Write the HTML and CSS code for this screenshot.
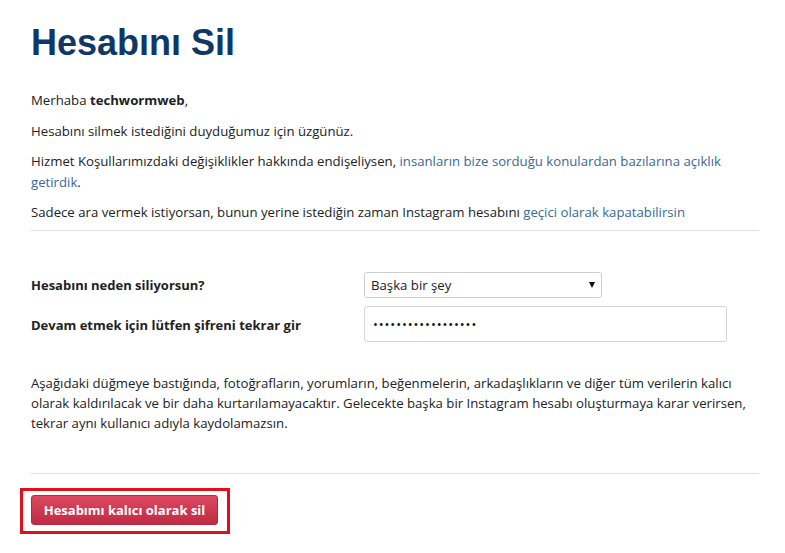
FILE: index.html
```html
<!DOCTYPE html>
<html lang="tr">
<head>
<meta charset="utf-8">
<title>Hesabını Sil</title>
<link rel="stylesheet" href="styles.css">
</head>
<body>
<main class="page">
  <h1 class="title">Hesabını Sil</h1>
  <p class="text">Merhaba <strong>techwormweb</strong>,</p>
  <p class="text">Hesabını silmek istediğini duyduğumuz için üzgünüz.</p>
  <p class="text">Hizmet Koşullarımızdaki değişiklikler hakkında endişeliysen, <a class="link" href="#">insanların bize sorduğu konulardan bazılarına açıklık getirdik</a>.</p>
  <p class="text">Sadece ara vermek istiyorsan, bunun yerine istediğin zaman Instagram hesabını <a class="link" href="#">geçici olarak kapatabilirsin</a></p>
  <hr class="rule rule-top">
  <form class="form">
    <div class="row">
      <label class="label" for="reason">Hesabını neden siliyorsun?</label>
      <div class="select-wrap">
        <select id="reason" class="select">
          <option>Başka bir şey</option>
        </select>
      </div>
    </div>
    <div class="row">
      <label class="label" for="pw">Devam etmek için lütfen şifreni tekrar gir</label>
      <input id="pw" class="input" type="password" value="abcdefghijklmnopqr">
    </div>
  </form>
  <p class="text warning">Aşağıdaki düğmeye bastığında, fotoğrafların, yorumların, beğenmelerin, arkadaşlıkların ve diğer tüm verilerin kalıcı olarak kaldırılacak ve bir daha kurtarılamayacaktır. Gelecekte başka bir Instagram hesabı oluşturmaya karar verirsen, tekrar aynı kullanıcı adıyla kaydolamazsın.</p>
  <hr class="rule rule-bottom">
  <div class="highlight">
    <button class="btn" type="button">Hesabımı kalıcı olarak sil</button>
  </div>
</main>
</body>
</html>
```
FILE: styles.css
```css
html, body {
  margin: 0;
  padding: 0;
  background: #fff;
}

body {
  font-family: "Open Sans", "Noto Sans", sans-serif;
  font-size: 13.2px;
  color: #222;
}

.page {
  width: 728px;
  padding: 22px 0 0 31px;
}

.title {
  font-family: "Liberation Sans", Arial, sans-serif;
  font-weight: bold;
  font-size: 36px;
  line-height: 42px;
  color: #0f3866;
  margin: 0 0 26px;
}

.text {
  margin: 0 0 10px;
  line-height: 20.5px;
}

.text strong {
  font-weight: 700;
}

.link {
  color: #3a6899;
  text-decoration: none;
}

.rule {
  border: 0;
  border-top: 1px solid #e1e1e1;
  margin: 0;
}

.rule-top {
  margin-top: -3px;
}

.form {
  padding-top: 41px;
  display: flex;
  flex-direction: column;
  gap: 8px;
}

.row {
  display: grid;
  grid-template-columns: 333px auto;
  align-items: center;
}

.label {
  font-weight: 700;
  font-size: 13px;
  color: #222;
}

.row + .row .label {
  padding-top: 3px;
}

.select-wrap {
  position: relative;
  width: 238px;
}

.select-wrap::after {
  content: "";
  position: absolute;
  right: 7px;
  top: 10px;
  border-left: 3.5px solid transparent;
  border-right: 3.5px solid transparent;
  border-top: 6px solid #111;
  pointer-events: none;
}

.select {
  -webkit-appearance: none;
  appearance: none;
  width: 238px;
  height: 26px;
  box-sizing: border-box;
  border: 1px solid #cfcfcf;
  border-radius: 3px;
  background: #fff;
  font-family: inherit;
  font-size: 13.2px;
  color: #222;
  padding: 0 6px;
  margin: 0;
}

.input {
  width: 363px;
  height: 36px;
  box-sizing: border-box;
  border: 1px solid #d6d6d6;
  border-radius: 3px;
  background: #fff;
  font-family: inherit;
  font-size: 13px;
  letter-spacing: 0.9px;
  color: #111;
  padding: 0 8px;
  margin: 0;
}

.warning {
  margin: 31px 0 40px;
  line-height: 20px;
}

.rule-bottom {
  margin-top: 0;
}

.highlight {
  display: inline-block;
  margin: 14px 0 0 -11px;
  border: 3px solid #e10f1b;
  padding: 4px 9px 6px 8px;
}

.btn {
  display: block;
  width: 187px;
  height: 30px;
  border: 1px solid #b02a41;
  border-radius: 3px;
  background: linear-gradient(#de4861, #bf2b44);
  color: #fff;
  font-family: inherit;
  font-weight: 700;
  font-size: 13px;
  padding: 0;
  margin: 0;
}
```
